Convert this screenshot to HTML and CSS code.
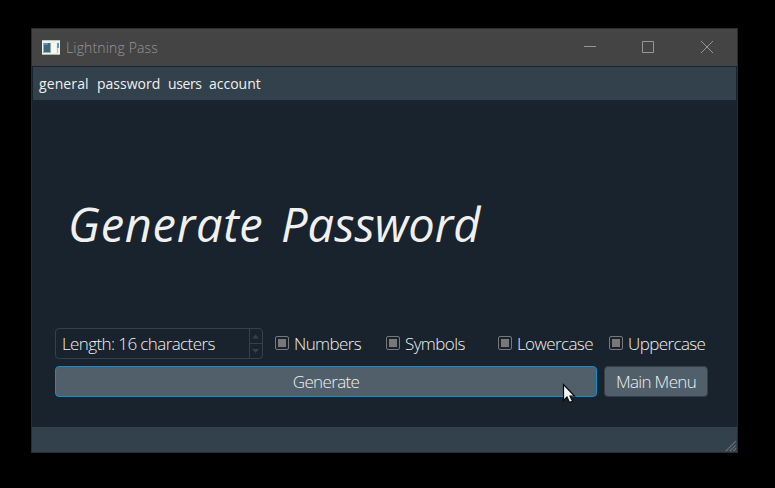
FILE: index.html
```html
<!DOCTYPE html>
<html lang="en">
<head>
<meta charset="utf-8">
<title>Lightning Pass</title>
<link rel="stylesheet" href="styles.css">
</head>
<body>
<div class="window">
  <header class="titlebar">
    <svg class="app-icon" width="18" height="16" viewBox="0 0 18 16">
      <rect x="0" y="0" width="18" height="15" fill="#eef2ec"/>
      <rect x="0" y="0" width="18" height="1" fill="#b5ccc0"/>
      <rect x="0" y="14" width="18" height="1" fill="#a9b9aa"/>
      <rect x="1" y="3" width="8" height="10" fill="#8eb4a0"/>
      <rect x="2" y="3" width="6" height="9" fill="#3d6584"/>
      <rect x="2" y="3" width="4" height="2" fill="#4f91bb"/>
      <rect x="10" y="3" width="4" height="10" fill="#f8f8ee"/>
      <rect x="15" y="3" width="2" height="5" fill="#5d9bb8"/>
      <rect x="15" y="8" width="1" height="5" fill="#a4cfb3"/>
    </svg>
    <span class="window-title">Lightning Pass</span>
    <svg class="controls" width="154" height="37" viewBox="0 0 154 37" fill="none" stroke="#969696">
      <path d="M7 17.5h12M65.500 12.500h11v11h-11zM124 12l12 12M136 12l-12 12"/>
    </svg>
  </header>
  <nav class="menubar">
    <span class="m-general">general</span><span class="m-password">password</span><span class="m-users">users</span><span class="m-account">account</span>
  </nav>
  <main class="content">
    <h1><span class="word-a">Generate</span><span class="word-b">Password</span></h1>
    <div class="options">
      <div class="spin">
        <span class="t-length">Length: 16 characters</span>
        <div class="steps">
          <svg width="12" height="14" viewBox="0 0 12 14"><path d="M2 9.500L5.500 5.500L9 9.500z" fill="#32414b"/></svg>
          <svg width="12" height="14" viewBox="0 0 12 14"><path d="M2 5L5.500 9L9 5z" fill="#32414b"/></svg>
        </div>
      </div>
      <label class="check"><i></i><span class="t-numbers">Numbers</span></label>
      <label class="check"><i></i><span class="t-symbols">Symbols</span></label>
      <label class="check"><i></i><span class="t-lower">Lowercase</span></label>
      <label class="check"><i></i><span class="t-upper">Uppercase</span></label>
    </div>
    <div class="actions">
      <button class="generate"><span class="t-generate">Generate</span></button>
      <button class="main-menu"><span class="t-menu">Main Menu</span></button>
    </div>
  </main>
  <footer class="statusbar">
    <svg width="12" height="12" viewBox="0 0 12 12" stroke="#777983" stroke-width="1.200" stroke-dasharray="1.500 .5"><path d="M1 11L11 1M5 11L11 5M8.500 11L11 8.500"/></svg>
  </footer>
</div>
<svg class="cursor" width="14" height="21" viewBox="0 0 14 21"><path d="M1.500 1.500V17.500L5 14L7.500 19.500L10.500 18L8 13H12.500z" fill="#f4f4f4" stroke="#080b0e" stroke-width="1.200"/></svg>
</body>
</html>
```

FILE: styles.css
```css
* { box-sizing: border-box; }
body {
  margin: 0;
  padding: 28px 37px 35px 31px;
  width: 775px;
  height: 488px;
  background: #000;
  overflow: hidden;
  color: #f0f0f0;
  font-family: "Open Sans", "Noto Sans", sans-serif;
}
.window {
  height: 425px;
  border: 1px solid #2b2c2e;
  background: #19232d;
  display: flex;
  flex-direction: column;
}
.titlebar {
  height: 37px;
  background: #444;
  display: flex;
  align-items: center;
  padding: 0 6px 0 10px;
}
.app-icon { margin-top: 1px; }
.window-title {
  margin-left: 6px;
  color: #969696;
  font-size: 14px;
  font-weight: 350;
  letter-spacing: .15px;
}
.controls { margin-left: auto; }
.menubar {
  height: 33px;
  margin: 1px 1px 0;
  background: #32414b;
  display: flex;
  align-items: center;
  padding-left: 6px;
  font-size: 14px;
  white-space: pre;
}
.menubar span { flex: none; }
.m-general { width: 58px; letter-spacing: .1px; }
.m-password { width: 71px; }
.m-users { width: 41px; letter-spacing: -.4px; }
.content {
  flex: 1;
  padding: 0 29px 30px 23px;
  display: flex;
  flex-direction: column;
}
h1 {
  margin: 90px 0 0 13px;
  height: 138px;
  display: flex;
  font-size: 47px;
  line-height: 68px;
  font-weight: 400;
  font-style: italic;
}
.word-a { width: 213px; letter-spacing: .7px; }
.options { height: 31px; display: flex; align-items: center; font-size: 17px; font-weight: 300; letter-spacing: -.6px; }
.options span { white-space: nowrap; }
.spin {
  width: 208px;
  height: 31px;
  border: 1px solid #32414b;
  border-radius: 4px;
  display: flex;
  align-items: center;
  padding-left: 6px;
  margin-right: 12px;
}
.steps {
  margin-left: auto;
  width: 13px;
  height: 29px;
  border-left: 1px solid #32414b;
  display: grid;
  grid-template-rows: 14px 14px;
  gap: 1px;
  background: linear-gradient(#32414b, #32414b) 0 14px / 100% 1px no-repeat;
}
.check { width: 111px; flex: none; display: flex; align-items: center; }
.check:nth-child(3) { width: 112px; }
.check:last-child { width: 99px; }
.check i {
  width: 14px;
  height: 14px;
  flex: none;
  margin: -1px 5px 0 0;
  border: 1px solid #787878;
  border-radius: 2px;
  background: #787878 content-box;
  padding: 2px;
}
.actions { height: 31px; margin-top: 7px; display: flex; gap: 7px; }
button {
  height: 31px;
  padding: 0;
  border: 1px solid #32414b;
  border-radius: 4px;
  background: #505f69;
  color: #f0f0f0;
  font: 300 17px "Open Sans", "Noto Sans", sans-serif;
  letter-spacing: -.65px;
}
.generate { width: 542px; border-color: #148cd2; }
.main-menu { width: 104px; }
.statusbar { height: 25px; background: #32414b; display: flex; justify-content: flex-end; align-items: flex-end; }
.cursor { position: absolute; left: 562px; top: 383px; }
```
